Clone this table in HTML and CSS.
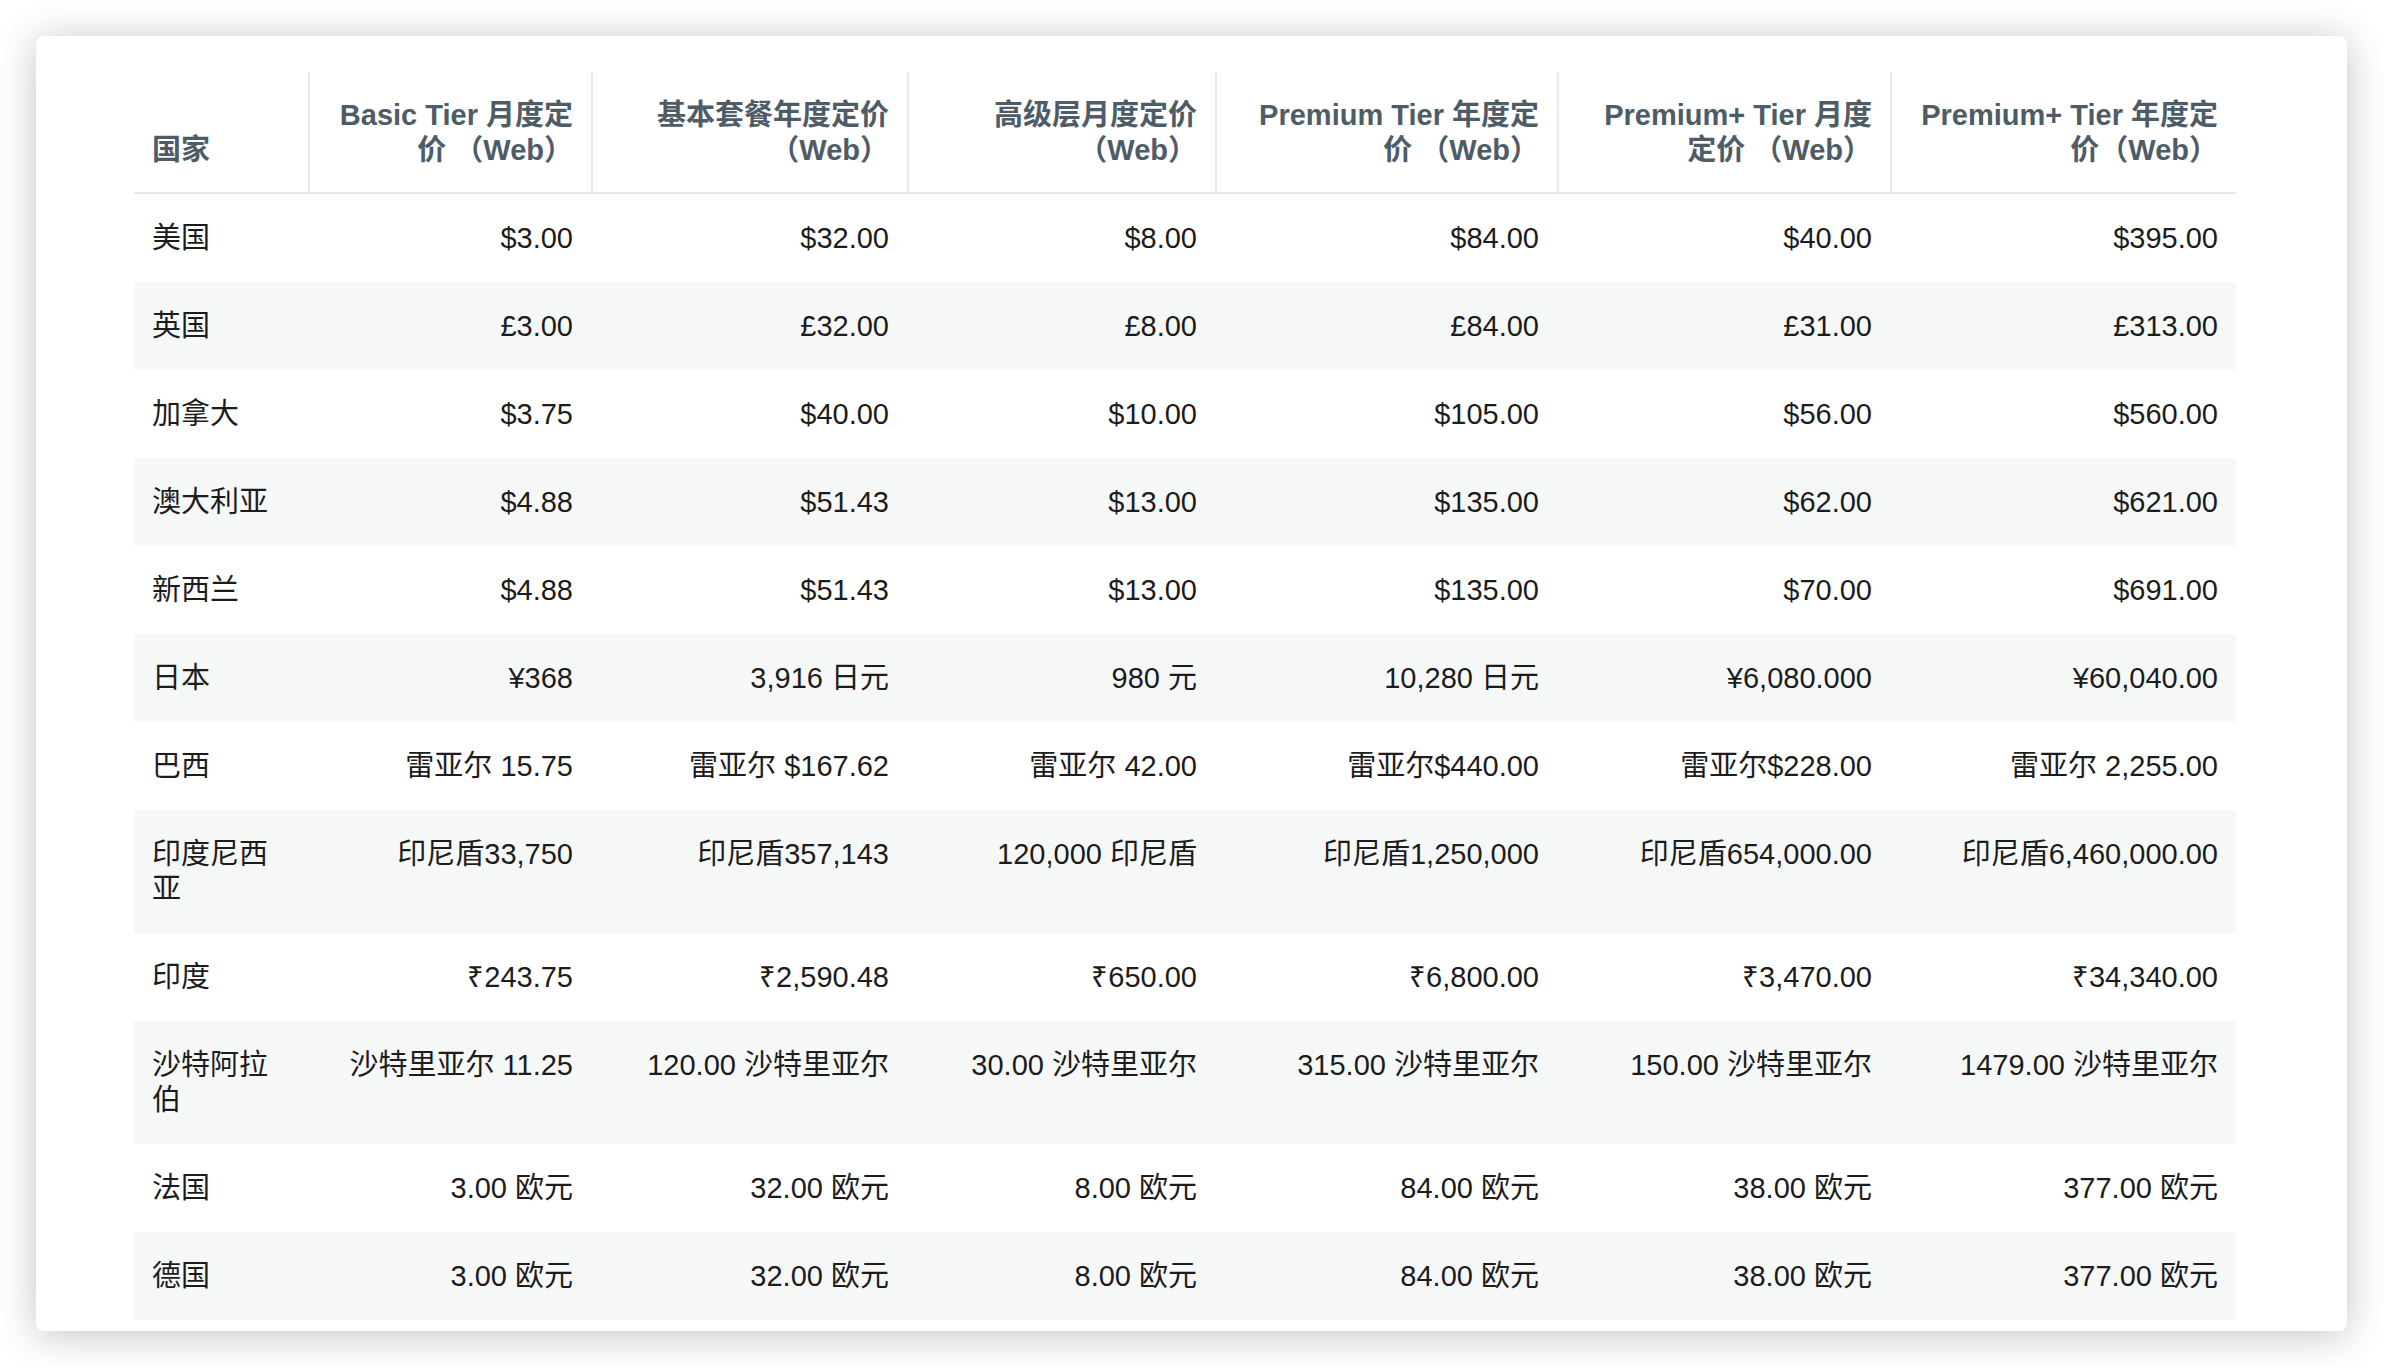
FILE: index.html
```html
<!DOCTYPE html>
<html lang="zh-CN">
<head>
<meta charset="utf-8">
<title>价格表</title>
<link rel="stylesheet" href="styles.css">
</head>
<body>
<div class="page">
  <div class="card">
    <table class="prices">
      <colgroup>
        <col class="c0"><col class="c1"><col class="c2"><col class="c3"><col class="c4"><col class="c5"><col class="c6">
      </colgroup>
      <thead>
        <tr>
          <th class="country">国家</th>
          <th>Basic Tier 月度定<br>价 （Web）</th>
          <th>基本套餐年度定价<br>（Web）</th>
          <th>高级层月度定价<br>（Web）</th>
          <th>Premium Tier 年度定<br>价 （Web）</th>
          <th>Premium+ Tier 月度<br>定价 （Web）</th>
          <th>Premium+ Tier 年度定<br>价（Web）</th>
        </tr>
      </thead>
      <tbody>
        <tr><td class="country">美国</td><td>$3.00</td><td>$32.00</td><td>$8.00</td><td>$84.00</td><td>$40.00</td><td>$395.00</td></tr>
        <tr><td class="country">英国</td><td>£3.00</td><td>£32.00</td><td>£8.00</td><td>£84.00</td><td>£31.00</td><td>£313.00</td></tr>
        <tr><td class="country">加拿大</td><td>$3.75</td><td>$40.00</td><td>$10.00</td><td>$105.00</td><td>$56.00</td><td>$560.00</td></tr>
        <tr><td class="country">澳大利亚</td><td>$4.88</td><td>$51.43</td><td>$13.00</td><td>$135.00</td><td>$62.00</td><td>$621.00</td></tr>
        <tr><td class="country">新西兰</td><td>$4.88</td><td>$51.43</td><td>$13.00</td><td>$135.00</td><td>$70.00</td><td>$691.00</td></tr>
        <tr><td class="country">日本</td><td>¥368</td><td>3,916 日元</td><td>980 元</td><td>10,280 日元</td><td>¥6,080.000</td><td>¥60,040.00</td></tr>
        <tr><td class="country">巴西</td><td>雷亚尔 15.75</td><td>雷亚尔 $167.62</td><td>雷亚尔 42.00</td><td>雷亚尔$440.00</td><td>雷亚尔$228.00</td><td>雷亚尔 2,255.00</td></tr>
        <tr><td class="country">印度尼西亚</td><td>印尼盾33,750</td><td>印尼盾357,143</td><td>120,000 印尼盾</td><td>印尼盾1,250,000</td><td>印尼盾654,000.00</td><td>印尼盾6,460,000.00</td></tr>
        <tr><td class="country">印度</td><td>₹243.75</td><td>₹2,590.48</td><td>₹650.00</td><td>₹6,800.00</td><td>₹3,470.00</td><td>₹34,340.00</td></tr>
        <tr><td class="country">沙特阿拉伯</td><td>沙特里亚尔 11.25</td><td>120.00 沙特里亚尔</td><td>30.00 沙特里亚尔</td><td>315.00 沙特里亚尔</td><td>150.00 沙特里亚尔</td><td>1479.00 沙特里亚尔</td></tr>
        <tr><td class="country">法国</td><td>3.00 欧元</td><td>32.00 欧元</td><td>8.00 欧元</td><td>84.00 欧元</td><td>38.00 欧元</td><td>377.00 欧元</td></tr>
        <tr><td class="country">德国</td><td>3.00 欧元</td><td>32.00 欧元</td><td>8.00 欧元</td><td>84.00 欧元</td><td>38.00 欧元</td><td>377.00 欧元</td></tr>
      </tbody>
    </table>
  </div>
</div>
</body>
</html>
```

FILE: styles.css
```css
html, body {
  margin: 0;
  padding: 0;
  background: #ffffff;
}

body {
  font-family: "Liberation Sans", "Noto Sans CJK SC", sans-serif;
  color: #1c1c1c;
}

.page {
  padding: 36px;
}

.card {
  width: 2311px;
  box-sizing: border-box;
  padding: 36px 111px 11px 98px;
  background: #ffffff;
  border-radius: 8px;
  box-shadow: 0 4px 40px rgba(0, 0, 0, 0.24);
}

.prices {
  width: 2102px;
  table-layout: fixed;
  border-collapse: separate;
  border-spacing: 0;
  font-size: 29px;
  line-height: 35px;
}

.c0 { width: 174px; }
.c1 { width: 283px; }
.c2 { width: 316px; }
.c3 { width: 308px; }
.c4 { width: 342px; }
.c5 { width: 333px; }
.c6 { width: 346px; }

.prices th {
  font-weight: 700;
  color: #4e5c68;
  text-align: right;
  vertical-align: bottom;
  white-space: nowrap;
  padding: 26px 18px 24px 18px;
  border-bottom: 2px solid #e6e6e6;
  border-left: 2px solid #e9e9e9;
}

.prices th.country {
  border-left: none;
  text-align: left;
}

.prices td {
  text-align: right;
  vertical-align: top;
  white-space: nowrap;
  padding: 26.5px 18px;
}

.prices td.country {
  text-align: left;
  white-space: normal;
}

.prices tbody tr:nth-child(even) td {
  background: #f6f8f8;
}
```
